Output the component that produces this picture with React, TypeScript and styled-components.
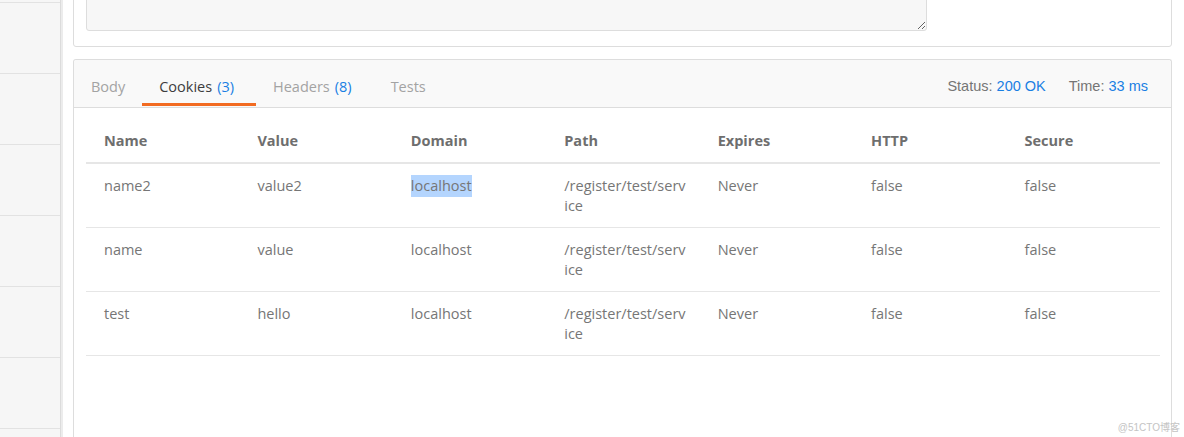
import styled, { createGlobalStyle } from 'styled-components'

const GlobalStyle = createGlobalStyle`
  html, body {
    margin: 0;
    padding: 0;
    background: #ffffff;
    overflow: hidden;
  }
  body {
    font-family: 'Open Sans', 'Noto Sans', sans-serif;
  }
`

const COLUMNS = ['Name', 'Value', 'Domain', 'Path', 'Expires', 'HTTP', 'Secure']

const COOKIES = [
  { name: 'name2', value: 'value2', domain: 'localhost', path: '/register/test/service', expires: 'Never', http: 'false', secure: 'false', selected: true },
  { name: 'name', value: 'value', domain: 'localhost', path: '/register/test/service', expires: 'Never', http: 'false', secure: 'false', selected: false },
  { name: 'test', value: 'hello', domain: 'localhost', path: '/register/test/service', expires: 'Never', http: 'false', secure: 'false', selected: false },
]

const TABS = [
  { label: 'Body', count: null, active: false },
  { label: 'Cookies', count: 3, active: true },
  { label: 'Headers', count: 8, active: false },
  { label: 'Tests', count: null, active: false },
]

const App = () => {
  return (
    <PAGE>
      <GlobalStyle />
      <SIDEBAR>
        {Array.from({ length: 8 }).map((_, i) => (
          <SIDE_ITEM key={i} />
        ))}
      </SIDEBAR>
      <MAIN>
        <BODY_CARD>
          <TEXTAREA defaultValue="" />
        </BODY_CARD>
        <RESPONSE>
          <RESPONSE_HEAD>
            <TABS_ROW>
              {TABS.map((tab) => (
                <TAB key={tab.label} $active={tab.active}>
                  {tab.label}
                  {tab.count !== null && <COUNT>({tab.count})</COUNT>}
                </TAB>
              ))}
            </TABS_ROW>
            <META>
              <META_ITEM>
                Status: <META_VALUE>200 OK</META_VALUE>
              </META_ITEM>
              <META_ITEM>
                Time: <META_VALUE>33 ms</META_VALUE>
              </META_ITEM>
            </META>
          </RESPONSE_HEAD>
          <TABLE_WRAP>
            <TABLE>
              <thead>
                <tr>
                  {COLUMNS.map((c) => (
                    <TH key={c}>{c}</TH>
                  ))}
                </tr>
              </thead>
              <tbody>
                {COOKIES.map((row) => (
                  <TR key={row.name}>
                    <TD>{row.name}</TD>
                    <TD>{row.value}</TD>
                    <TD>{row.selected ? <SELECTED>{row.domain}</SELECTED> : row.domain}</TD>
                    <TD>{row.path}</TD>
                    <TD>{row.expires}</TD>
                    <TD>{row.http}</TD>
                    <TD>{row.secure}</TD>
                  </TR>
                ))}
              </tbody>
            </TABLE>
          </TABLE_WRAP>
        </RESPONSE>
      </MAIN>
      <WATERMARK>@51CTO博客</WATERMARK>
    </PAGE>
  )
}

export default App

const PAGE = styled.div`
  position: relative;
  display: flex;
  width: 1184px;
  height: 437px;
  overflow: hidden;
  background: #ffffff;
`

const SIDEBAR = styled.aside`
  flex: 0 0 60px;
  margin-top: -68px;
  background: #f6f6f6;
  border-right: 1px solid #dcdcdc;
  box-shadow: 2px 0 0 #ececec;
`

const SIDE_ITEM = styled.div`
  height: 70px;
  border-bottom: 1px solid #e2e2e2;
`

const MAIN = styled.main`
  flex: 1;
  display: flex;
  flex-direction: column;
  gap: 12px;
  padding: 0 12px 0 12px;
  margin-top: -64px;
`

const BODY_CARD = styled.section`
  border: 1px solid #dddddd;
  border-radius: 3px;
  padding: 12px 244px 15px 12px;
  background: #ffffff;
`

const TEXTAREA = styled.textarea`
  display: block;
  width: 100%;
  box-sizing: border-box;
  height: 82px;
  border: 1px solid #dddddd;
  border-radius: 3px;
  background: #f7f7f7;
  resize: vertical;
  outline: none;
`

const RESPONSE = styled.section`
  flex: 1;
  border: 1px solid #dddddd;
  border-radius: 3px 3px 0 0;
  border-bottom: none;
  background: #ffffff;
  min-height: 420px;
`

const RESPONSE_HEAD = styled.header`
  display: flex;
  justify-content: space-between;
  align-items: stretch;
  height: 47px;
  background: #f9f9f9;
  border-bottom: 1px solid #dddddd;
  border-radius: 3px 3px 0 0;
`

const TABS_ROW = styled.nav`
  display: flex;
  align-items: stretch;
`

const TAB = styled.div<{ $active: boolean }>`
  display: flex;
  align-items: center;
  gap: 5px;
  padding: 9px 17px 0;
  font-size: 14.5px;
  color: ${({ $active }) => ($active ? '#3d3d3d' : '#a3a3a3')};
  border-bottom: 3px solid ${({ $active }) => ($active ? '#f26b21' : 'transparent')};
  margin-bottom: 1px;
`

const COUNT = styled.span`
  color: #1a7fe3;
  margin-right: 5px;
`

const META = styled.div`
  display: flex;
  align-items: center;
  gap: 23px;
  padding: 4px 23px 0 0;
  font-family: 'Liberation Sans', Arial, sans-serif;
  font-size: 14.5px;
`

const META_ITEM = styled.span`
  color: #757575;
`

const META_VALUE = styled.span`
  color: #1a7fe3;
`

const TABLE_WRAP = styled.div`
  padding: 12px 11px 0 12px;
`

const TABLE = styled.table`
  width: 100%;
  border-collapse: collapse;
  table-layout: fixed;
`

const TH = styled.th`
  text-align: left;
  padding: 11px 18px;
  line-height: 20px;
  font-size: 14.5px;
  font-weight: 700;
  color: #6e6e6e;
  border-bottom: 2px solid #e6e6e6;
`

const TR = styled.tr`
  border-bottom: 1px solid #e6e6e6;
`

const TD = styled.td`
  vertical-align: top;
  padding: 12px 14px 11px 18px;
  line-height: 20px;
  font-size: 14.5px;
  color: #767676;
  word-break: break-all;
`

const SELECTED = styled.span`
  background: #b4d5fe;
  padding: 1px 0 2px;
`

const WATERMARK = styled.div`
  position: absolute;
  right: 4px;
  bottom: 3px;
  font-family: 'Liberation Sans', 'Noto Sans CJK SC', sans-serif;
  font-size: 10px;
  color: #c4c4c4;
`
